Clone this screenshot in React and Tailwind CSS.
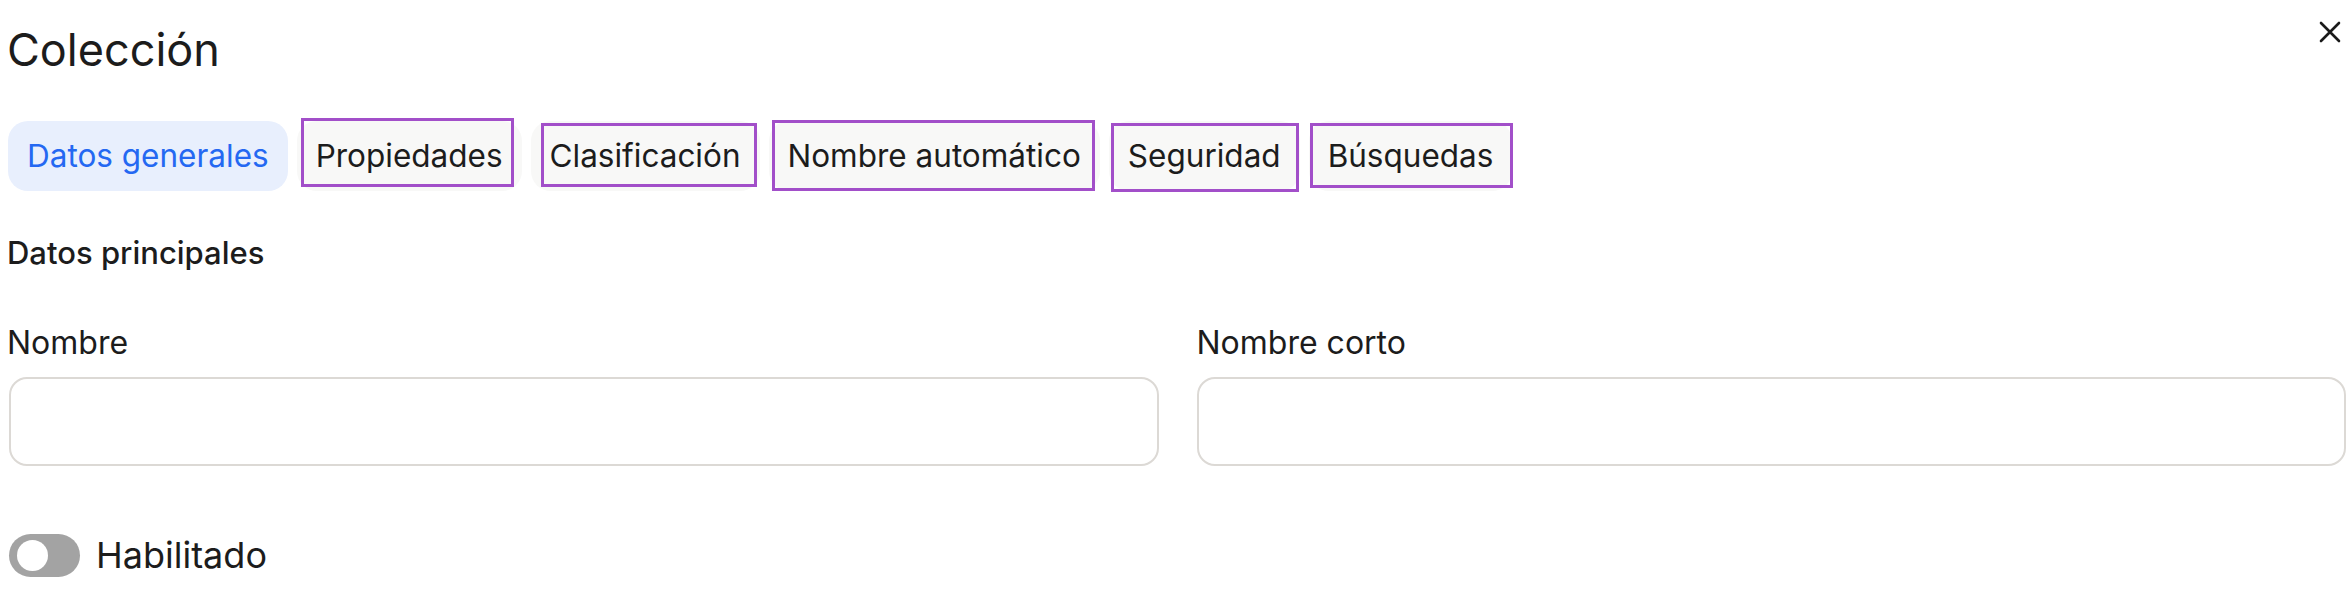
import { useState } from "react";

const tabs = [
  { id: "general", label: "Datos generales" },
  { id: "props", label: "Propiedades", mark: "left-[4px] right-[8px] top-[-3px] bottom-[4px]" },
  { id: "clasif", label: "Clasificación", mark: "left-[10px] right-[3px] top-[2px] bottom-[4px]" },
  { id: "auto", label: "Nombre automático", mark: "left-[3px] right-[5px] top-[-1px] bottom-[0px]" },
  { id: "seg", label: "Seguridad", mark: "left-[2px] right-[1px] top-[2px] bottom-[-1px]" },
  { id: "busq", label: "Búsquedas", mark: "left-[1px] right-[-1px] top-[2px] bottom-[3px]" },
];

function CloseIcon() {
  return (
    <svg width="22" height="22" viewBox="0 0 22 22" fill="none">
      <path d="M2 2L20 20M20 2L2 20" stroke="#1a1a1a" strokeWidth="2.6" strokeLinecap="round" />
    </svg>
  );
}

export default function App() {
  const [active, setActive] = useState("general");
  const [enabled, setEnabled] = useState(false);

  return (
    <div className="bg-white min-h-screen pl-[9px] pr-[4px] font-['Inter','Noto_Sans',sans-serif] text-[#1c1c1c]">
      {/* Header */}
      <div className="flex items-start justify-between">
        <h1 className="mt-[27px] -ml-[2px] text-[45px] leading-[45px] font-normal">Colección</h1>
        <button className="mt-[21px] mr-[5px]">
          <CloseIcon />
        </button>
      </div>

      {/* Tabs */}
      <div className="flex items-center gap-[9px] mt-[49px] -ml-[1px]">
        {tabs.map((tab) => (
          <button
            key={tab.id}
            onClick={() => setActive(tab.id)}
            className={`relative h-[70px] px-[19px] rounded-[20px] text-[31.5px] leading-[70px] whitespace-nowrap ${
              active === tab.id ? "bg-[#e8effd] text-[#2468f2]" : "bg-[#f8f8f7] text-[#1c1c1c]"
            }`}
          >
            {tab.label}
            {tab.mark && (
              <span className={`absolute border-[3px] border-[#a24fc9] pointer-events-none ${tab.mark}`} />
            )}
          </button>
        ))}
      </div>

      {/* Datos principales */}
      <h2 className="mt-[47px] -ml-[2px] text-[31px] leading-[30px] font-medium">Datos principales</h2>

      <div className="grid grid-cols-2 gap-x-[38px] mt-[60px]">
        <div>
          <label className="block -ml-[2px] text-[32px] leading-[30px]">Nombre</label>
          <input className="mt-[19px] block w-full h-[89px] rounded-[18px] border-2 border-[#dcd9d5] bg-white px-5 text-[30px] outline-none" />
        </div>
        <div>
          <label className="block text-[32px] leading-[30px]">Nombre corto</label>
          <input className="mt-[19px] block w-full h-[89px] rounded-[18px] border-2 border-[#dcd9d5] bg-white px-5 text-[30px] outline-none" />
        </div>
      </div>

      {/* Toggle */}
      <div className="flex items-center gap-[16px] mt-[68px]">
        <button
          onClick={() => setEnabled(!enabled)}
          className={`relative w-[71px] h-[43px] rounded-full ${enabled ? "bg-[#2468f2]" : "bg-[#a3a3a3]"}`}
        >
          <span
            className={`absolute top-[6px] w-[31px] h-[31px] rounded-full bg-white ${enabled ? "left-[32px]" : "left-[8px]"}`}
          />
        </button>
        <span className="text-[36px] leading-[43px]">Habilitado</span>
      </div>
    </div>
  );
}
